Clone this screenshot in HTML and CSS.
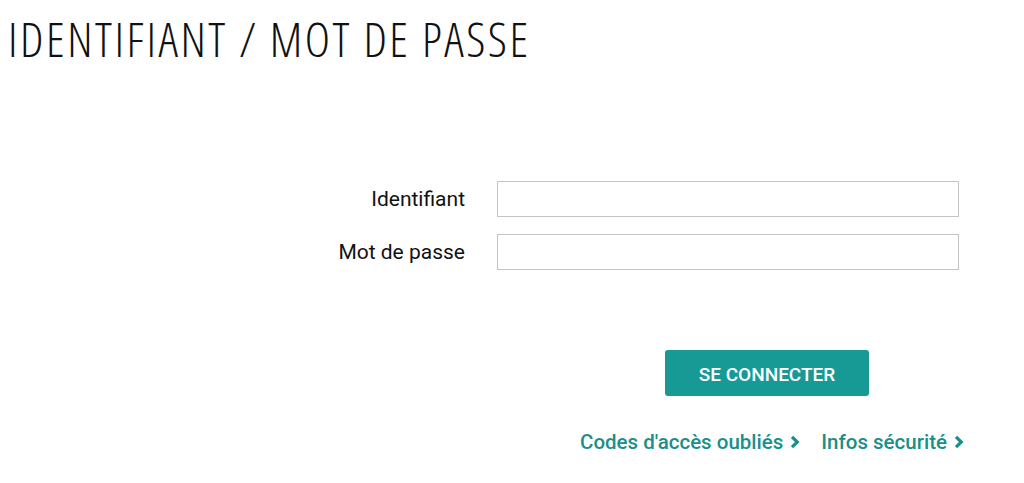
FILE: index.html
```html
<!DOCTYPE html>
<html lang="fr">
<head>
<meta charset="utf-8">
<title>Identifiant / Mot de passe</title>
<link rel="stylesheet" href="styles.css">
</head>
<body>
<h1 class="title">IDENTIFIANT / MOT DE PASSE</h1>
<form class="login">
  <div class="fields">
    <label class="label" for="id">Identifiant</label>
    <input class="input" id="id" type="text">
    <label class="label" for="pw">Mot de passe</label>
    <input class="input" id="pw" type="password">
  </div>
  <div class="actions">
    <button class="btn" type="button">SE CONNECTER</button>
  </div>
  <div class="links">
    <a class="link" href="#">Codes d'accès oubliés <span class="chev"><svg viewBox="0 0 10 14" width="10" height="14"><path d="M2 1.8 L7.3 7 L2 12.2" fill="none" stroke="currentColor" stroke-width="3.2"/></svg></span></a>
    <a class="link" href="#">Infos sécurité <span class="chev"><svg viewBox="0 0 10 14" width="10" height="14"><path d="M2 1.8 L7.3 7 L2 12.2" fill="none" stroke="currentColor" stroke-width="3.2"/></svg></span></a>
  </div>
</form>
</body>
</html>
```
FILE: styles.css
```css
html, body { margin: 0; padding: 0; background: #fff; }
body { font-family: Roboto, "Liberation Sans", sans-serif; color: #111; }
.title {
  margin: 0;
  padding: 11px 0 0 8px;
  font-family: "Open Sans", "DejaVu Sans", sans-serif;
  font-stretch: 85%;
  font-weight: 340;
  font-size: 48px;
  line-height: 56px;
  letter-spacing: 2.5px;
  color: #111;
}
.login { display: flex; flex-direction: column; }
.fields {
  margin-top: 114px;
  display: grid;
  grid-template-columns: 465px 462px;
  column-gap: 32px;
  row-gap: 17px;
  align-items: center;
}
.label { text-align: right; font-size: 21px; color: #111; }
.input {
  box-sizing: border-box;
  height: 36px;
  border: 1px solid #c4c4c4;
  margin: 0;
  padding: 0 8px;
  font: inherit;
}
.actions { margin-top: 80px; display: flex; padding-left: 665px; }
.btn {
  width: 204px; height: 46px;
  background: #179a95; color: #fff;
  border: none; border-radius: 3px;
  font-family: Roboto, sans-serif; font-weight: 500; font-size: 19px;
  padding: 2px 0 0;
}
.links { margin-top: 34px; display: flex; gap: 21px; padding-left: 580px; }
.link { color: #1a8f8a; text-decoration: none; font-weight: 500; font-size: 20.5px; display: inline-flex; align-items: center; gap: 7px; }
.chev { display: inline-flex; }
```
